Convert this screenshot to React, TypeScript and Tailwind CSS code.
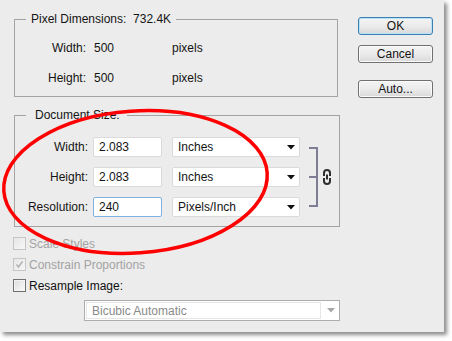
import React from "react";

function Select({ label }: { label: string }) {
  return (
    <div className="ml-[10px] w-[128px] h-[20px] bg-white border border-[#dadada] rounded-[2px] flex items-center pl-[5px] pr-[4px]">
      <span className="flex-1 leading-[14px]">{label}</span>
      <svg width="8" height="5" viewBox="0 0 8 5">
        <path d="M0 0 H8 L4 4.5 Z" fill="#111" />
      </svg>
    </div>
  );
}

function Input({ value, active }: { value: string; active?: boolean }) {
  return (
    <div
      className={
        "ml-[5px] w-[69px] h-[20px] bg-white rounded-[2px] flex items-center pl-[5px] leading-[14px] border " +
        (active ? "border-[#7fb1e4]" : "border-[#dadada]")
      }
    >
      {value}
    </div>
  );
}

function DocRow({ label, value, unit, active }: { label: string; value: string; unit: string; active?: boolean }) {
  return (
    <div className="flex items-center h-[20px]">
      <span className="w-[73px] text-right leading-[14px]">{label}</span>
      <Input value={value} active={active} />
      <Select label={unit} />
    </div>
  );
}

function PixRow({ label, value }: { label: string; value: string }) {
  return (
    <div className="flex items-center h-[20px]">
      <span className="w-[71px] text-right leading-[14px]">{label}</span>
      <span className="ml-[8px] w-[78px] leading-[14px]">{value}</span>
      <span className="leading-[14px]">pixels</span>
    </div>
  );
}

function Button({ label, def, className }: { label: string; def?: boolean; className?: string }) {
  return (
    <div
      className={
        "w-[75px] h-[18px] rounded-[3px] border flex items-center justify-center leading-[14px] bg-gradient-to-b from-[#f4f4f4] via-[#ebebeb] to-[#d9d9d9] " +
        (def ? "border-[#3c7fb1] shadow-[inset_0_0_0_1px_#b7e2f7]" : "border-[#707070] shadow-[inset_0_0_0_1px_#fbfbfb]") +
        " " +
        (className ?? "")
      }
    >
      {label}
    </div>
  );
}

function Check({ label, disabled, checked }: { label: string; disabled?: boolean; checked?: boolean }) {
  return (
    <div className="flex items-center h-[13px] -ml-[1px]">
      <div
        className={
          "w-[13px] h-[13px] border flex items-center justify-center " +
          (disabled
            ? "border-[#c5c5c5] bg-gradient-to-br from-[#e6e6e6] to-[#f7f7f7]"
            : "border-[#717171] bg-gradient-to-br from-[#dcdcdc] to-[#fbfbfb] shadow-[inset_0_0_0_1px_#f4f4f4]")
        }
      >
        {checked && (
          <svg width="9" height="9" viewBox="0 0 9 9">
            <path d="M1.5 4.5 L3.5 7 L7.5 1.5" fill="none" stroke="#b0b0b0" strokeWidth="1.4" />
          </svg>
        )}
      </div>
      <span className={"ml-[3px] leading-[14px] " + (disabled ? "text-[#a3a3a3]" : "text-[#111]")}>{label}</span>
    </div>
  );
}

export default function App() {
  return (
    <div className="w-[452px] h-[341px] bg-white">
      <div
        className="relative w-[444px] h-[332px] bg-[#ececec] shadow-[3px_3px_4px_rgba(0,0,0,0.45)] flex pl-[14px] text-[12px] text-[#141414]"
        style={{ fontFamily: "'Liberation Sans', Arial, sans-serif" }}
      >
        <div className="w-[326px] flex flex-col">
          <fieldset className="mt-[12px] w-[324px] border border-[#a3a3a3] p-0 pb-[8px] m-0 min-w-0">
            <legend className="ml-[11px] px-[5px] leading-[14px] whitespace-pre">Pixel Dimensions:  732.4K</legend>
            <div className="pt-[12px] flex flex-col gap-[10px]">
              <PixRow label="Width:" value="500" />
              <PixRow label="Height:" value="500" />
            </div>
          </fieldset>

          <fieldset className="mt-[11px] w-[326px] border border-[#a3a3a3] p-0 pb-[9px] m-0 min-w-0">
            <legend className="ml-[11px] pl-[9px] pr-[7px] leading-[14px]">Document Size:</legend>
            <div className="pt-[15px] flex">
              <div className="flex flex-col gap-[10px]">
                <DocRow label="Width:" value="2.083" unit="Inches" />
                <DocRow label="Height:" value="2.083" unit="Inches" />
                <DocRow label="Resolution:" value="240" unit="Pixels/Inch" active />
              </div>
              <svg className="ml-[9px] mt-[10px]" width="24" height="62" viewBox="0 0 24 62">
                <path d="M0 1 H9 M0 30 H9 M0 59 H9 M8 0 V60" fill="none" stroke="#7d7d96" strokeWidth="2" />
                <path
                  d="M15 29 V26 A3 3 0 0 1 21 26 V29 M15 31 V34 A3 3 0 0 0 21 34 V31 M18 27.5 V32.5"
                  fill="none"
                  stroke="#2e2e2e"
                  strokeWidth="2"
                />
              </svg>
            </div>
          </fieldset>

          <div className="mt-[10px] flex flex-col gap-[8px]">
            <Check label="Scale Styles" disabled />
            <Check label="Constrain Proportions" disabled checked />
            <Check label="Resample Image:" />
          </div>

          <div className="mt-[8px] ml-[70px] w-[256px] h-[21px] border border-[#adadad] bg-white flex">
            <div className="flex-1 m-[1px] border border-[#e6e6e6] flex items-center pl-[5px] text-[#8a8a8a] leading-[14px]">
              Bicubic Automatic
            </div>
            <div className="w-[17px] flex items-center justify-center">
              <svg width="8" height="5" viewBox="0 0 8 5">
                <path d="M0 0 H8 L4 4.5 Z" fill="#a8a8a8" />
              </svg>
            </div>
          </div>
        </div>

        <div className="ml-[18px] pt-[17px] flex flex-col">
          <Button label="OK" def />
          <Button label="Cancel" className="mt-[10px]" />
          <Button label="Auto..." className="mt-[17px]" />
        </div>

        <svg className="absolute inset-0 pointer-events-none" width="444" height="332" viewBox="0 0 444 332">
          <ellipse
            cx="135.5"
            cy="182"
            rx="132"
            ry="71"
            transform="rotate(-4 135.5 182)"
            fill="none"
            stroke="#ff0000"
            strokeWidth="3.5"
          />
        </svg>
      </div>
    </div>
  );
}
